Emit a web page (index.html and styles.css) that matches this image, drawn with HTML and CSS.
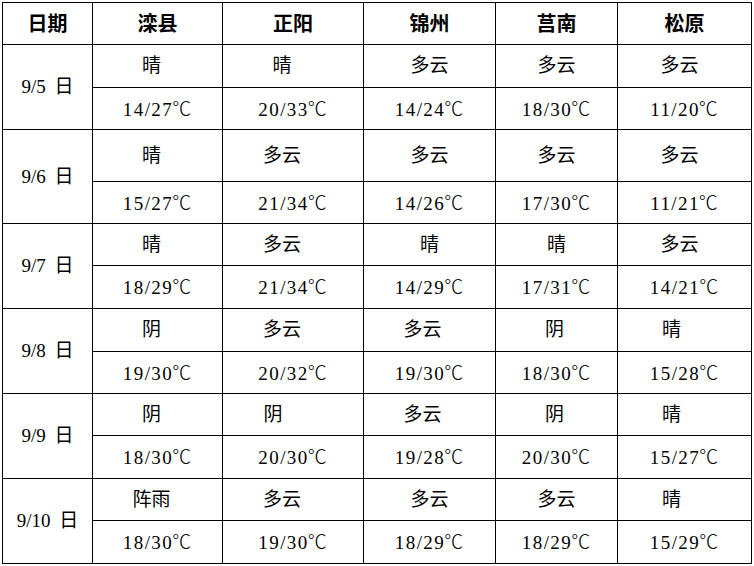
FILE: index.html
```html
<!DOCTYPE html>
<html lang="zh-CN">
<head>
<meta charset="utf-8">
<title>天气预报</title>
<link rel="stylesheet" href="styles.css">
</head>
<body>
<table class="wx">
  <colgroup>
    <col class="c-date"><col class="c1"><col class="c2"><col class="c3"><col class="c4"><col class="c5">
  </colgroup>
  <thead>
    <tr class="h42">
      <th>日期</th><th>滦县</th><th>正阳</th><th>锦州</th><th>莒南</th><th>松原</th>
    </tr>
  </thead>
  <tbody>
    <tr class="h43">
      <td class="date" rowspan="2">9/5 日</td>
      <td class="o12">晴</td><td class="o22">晴</td><td>多云</td><td>多云</td><td class="o10">多云</td>
    </tr>
    <tr class="h42 temp">
      <td>14/27<span class="deg">℃</span></td><td>20/33<span class="deg">℃</span></td><td>14/24<span class="deg">℃</span></td><td>18/30<span class="deg">℃</span></td><td>11/20<span class="deg">℃</span></td>
    </tr>
    <tr class="h52">
      <td class="date" rowspan="2">9/6 日</td>
      <td class="o12">晴</td><td class="o22">多云</td><td>多云</td><td>多云</td><td class="o10">多云</td>
    </tr>
    <tr class="h42 temp">
      <td>15/27<span class="deg">℃</span></td><td>21/34<span class="deg">℃</span></td><td>14/26<span class="deg">℃</span></td><td>17/30<span class="deg">℃</span></td><td>11/21<span class="deg">℃</span></td>
    </tr>
    <tr class="h42">
      <td class="date" rowspan="2">9/7 日</td>
      <td class="o12">晴</td><td class="o22">多云</td><td>晴</td><td>晴</td><td class="o10">多云</td>
    </tr>
    <tr class="h43 temp">
      <td>18/29<span class="deg">℃</span></td><td>21/34<span class="deg">℃</span></td><td>14/29<span class="deg">℃</span></td><td>17/31<span class="deg">℃</span></td><td>14/21<span class="deg">℃</span></td>
    </tr>
    <tr class="h43">
      <td class="date" rowspan="2">9/8 日</td>
      <td class="o12">阴</td><td class="o22">多云</td><td class="o14">多云</td><td class="o4">阴</td><td class="o26">晴</td>
    </tr>
    <tr class="h42 temp">
      <td>19/30<span class="deg">℃</span></td><td>20/32<span class="deg">℃</span></td><td>19/30<span class="deg">℃</span></td><td>18/30<span class="deg">℃</span></td><td>15/28<span class="deg">℃</span></td>
    </tr>
    <tr class="h42">
      <td class="date" rowspan="2">9/9 日</td>
      <td class="o12">阴</td><td class="o40">阴</td><td class="o14">多云</td><td class="o4">阴</td><td class="o26">晴</td>
    </tr>
    <tr class="h43 temp">
      <td>18/30<span class="deg">℃</span></td><td>20/30<span class="deg">℃</span></td><td>19/28<span class="deg">℃</span></td><td>20/30<span class="deg">℃</span></td><td>15/27<span class="deg">℃</span></td>
    </tr>
    <tr class="h42">
      <td class="date" rowspan="2">9/10 日</td>
      <td class="o12">阵雨</td><td class="o22">多云</td><td>多云</td><td>多云</td><td class="o26">晴</td>
    </tr>
    <tr class="h43 temp">
      <td>18/30<span class="deg">℃</span></td><td>19/30<span class="deg">℃</span></td><td>18/29<span class="deg">℃</span></td><td>18/29<span class="deg">℃</span></td><td>15/29<span class="deg">℃</span></td>
    </tr>
  </tbody>
</table>
</body>
</html>
```
FILE: styles.css
```css
html, body {
  margin: 0;
  padding: 0;
  background: #ffffff;
}

body {
  padding: 2px;
  font-family: "Liberation Serif", "Noto Sans CJK SC", serif;
  color: #000000;
}

.wx {
  border-collapse: collapse;
  table-layout: fixed;
  width: 749px;
}

.c-date { width: 90px; }
.c1 { width: 130px; }
.c2 { width: 141px; }
.c3 { width: 132px; }
.c4 { width: 122px; }
.c5 { width: 134px; }

.wx th,
.wx td {
  border: 1px solid #000000;
  padding: 0;
  text-align: center;
  vertical-align: middle;
  font-size: 19px;
  line-height: 22px;
  white-space: nowrap;
}

.wx th {
  font-weight: bold;
  font-size: 20px;
}

.wx td.date {
  font-size: 19px;
  word-spacing: 4px;
}

.temp td {
  letter-spacing: 1.4px;
}

.deg {
  display: inline-block;
  font-family: "Noto Sans CJK SC", sans-serif;
  font-weight: 300;
  letter-spacing: 0;
  margin-left: -1px;
  margin-right: 1px;
}

.h42 { height: 42px; }
.h43 { height: 43px; }
.h52 { height: 52px; }

.o4  { padding-right: 4px !important; }
.o10 { padding-right: 10px !important; }
.o12 { padding-right: 12px !important; }
.o14 { padding-right: 14px !important; }
.o22 { padding-right: 22px !important; }
.o26 { padding-right: 26px !important; }
.o40 { padding-right: 40px !important; }
```
